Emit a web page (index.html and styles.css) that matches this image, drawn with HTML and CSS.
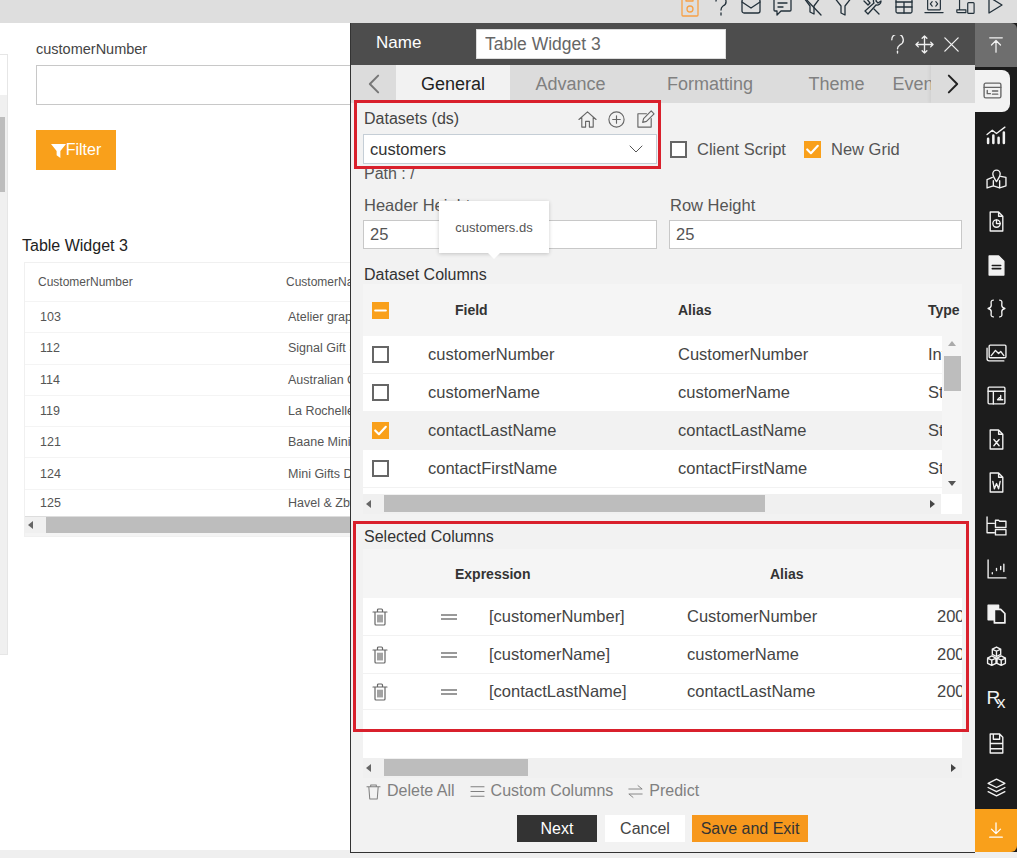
FILE: index.html
```html
<!DOCTYPE html>
<html lang="en">
<head>
    <meta charset="UTF-8">
    <title>Table Widget 3</title>
    <link rel="stylesheet" href="styles.css">
</head>
<body>
    <div class="toolbar">
        <svg class="tool tool-save" viewBox="0 0 20 20"><path d="M3 -2h11l4 4v15a1 1 0 0 1-1 1H3a1 1 0 0 1-1-1V-1a1 1 0 0 1 1-1z"/><circle cx="10" cy="11" r="3"/><path d="M6 -2v5h7v-5"/></svg>
        <svg class="tool" viewBox="0 0 20 20"><path d="M5 3a5 5 0 1 1 7 5c-1.500 1-2 2-2 4"/><path d="M10 15v2"/></svg>
        <svg class="tool" viewBox="0 0 20 20"><rect x="1" y="1" width="18" height="14" rx="2"/><path d="M1 4l9 6 9-6"/></svg>
        <svg class="tool" viewBox="0 0 20 20"><path d="M3 -1h15a1 1 0 0 1 1 1v12a1 1 0 0 1-1 1H9l-4 4v-4H3a1 1 0 0 1-1-1V0a1 1 0 0 1 1-1z"/><path d="M6 5h9M6 9h5"/></svg>
        <svg class="tool" viewBox="0 0 20 20"><path d="M2 0h16l-6 8v8l-4-2V8z"/><path d="M1 -2l18 19"/></svg>
        <svg class="tool" viewBox="0 0 20 20"><path d="M1 -1h18l-7 9v9l-4-2V8z"/></svg>
        <svg class="tool" viewBox="0 0 20 20"><path d="M3 0l4 5-2 2-4-4M14 -1a4 4 0 0 0-3 6L2 13l3 3 8-9a4 4 0 0 0 5-4l-3 2-2-2z"/><path d="M11 11l5 5"/></svg>
        <svg class="tool" viewBox="0 0 20 20"><rect x="2" y="-1" width="16" height="16" rx="1.500"/><path d="M2 4h16M2 9h16M10 4v11"/></svg>
        <svg class="tool" viewBox="0 0 22 20"><rect x="4" y="-1" width="14" height="13" rx="1"/><path d="M1 15h20M9 3L7 5.500 9 8M13 3l2 2.500L13 8"/></svg>
        <svg class="tool" viewBox="0 0 22 20"><path d="M5 -1v13M2 12h10v3H3a1 1 0 0 1-1-1z"/><rect x="14" y="4" width="7" height="12" rx="1"/></svg>
        <svg class="tool" viewBox="0 0 20 20"><path d="M4 -1l13 8L4 15z"/></svg>
    </div>

    <div class="workspace">
        <div class="canvas">
            <div class="side-strip">
                <div class="side-fill"><div class="side-thumb"></div></div>
            </div>
            <div class="report">
                <div class="filter-form">
                    <label class="filter-label">customerNumber</label>
                    <input class="filter-input" type="text">
                    <button class="filter-btn">
                        <svg viewBox="0 0 16 16" class="filter-icon"><path d="M0 1h16L10 8.500V16l-4-3V8.500z"/></svg>Filter
                    </button>
                </div>
                <h3 class="widget-title">Table Widget 3</h3>
                <div class="preview-table">
                    <div class="preview-row preview-head"><span>CustomerNumber</span><span>CustomerName</span></div>
                    <div class="preview-row"><span>103</span><span>Atelier graphique</span></div>
                    <div class="preview-row"><span>112</span><span>Signal Gift Stores</span></div>
                    <div class="preview-row"><span>114</span><span>Australian Collectors</span></div>
                    <div class="preview-row"><span>119</span><span>La Rochelle Gifts</span></div>
                    <div class="preview-row"><span>121</span><span>Baane Mini Imports</span></div>
                    <div class="preview-row"><span>124</span><span>Mini Gifts Distributors</span></div>
                    <div class="preview-row"><span>125</span><span>Havel &amp; Zbyszek</span></div>
                    <div class="scroll-h preview-scroll">
                        <span class="arrow-left"></span>
                        <div class="thumb-h"></div>
                    </div>
                </div>
            </div>
        </div>

        <div class="panel">
            <div class="panel-header">
                <span class="panel-name">Name</span>
                <input class="panel-name-input" type="text" value="Table Widget 3">
                <div class="panel-actions">
                    <svg viewBox="0 0 20 20"><path d="M4 5a6 6 0 1 1 8.500 5.500C11 11.500 10 12.500 10 14.500"/><path d="M10 17v2"/></svg>
                    <svg viewBox="0 0 20 20"><path d="M10 1v18M1 10h18M7.500 3.500L10 1l2.500 2.500M7.500 16.500L10 19l2.500-2.500M3.500 7.500L1 10l2.500 2.500M16.500 7.500L19 10l-2.500 2.500"/></svg>
                    <svg viewBox="0 0 20 20"><path d="M3 3l14 14M17 3L3 17"/></svg>
                </div>
            </div>

            <div class="tabs">
                <div class="tab-nav tab-prev"><svg viewBox="0 0 14 24"><path d="M12 2L2 12l10 10"/></svg></div>
                <div class="tab active">General</div>
                <div class="tab tab-advance">Advance</div>
                <div class="tab tab-formatting">Formatting</div>
                <div class="tab tab-theme">Theme</div>
                <div class="tab tab-events">Events</div>
                <div class="tab-nav tab-next"><svg viewBox="0 0 14 24"><path d="M2 2l10 10L2 22"/></svg></div>
            </div>

            <div class="panel-body">
                <div class="form-cols">
                    <div>
                        <div class="dataset-head">
                            <span>Datasets (ds)</span>
                            <div class="dataset-icons">
                                <svg viewBox="0 0 20 20"><path d="M1 10l9-8 9 8M4 8v10h4v-6h4v6h4V8"/></svg>
                                <svg viewBox="0 0 20 20"><circle cx="10" cy="10" r="8"/><path d="M10 6v8M6 10h8"/></svg>
                                <svg viewBox="0 0 20 20"><path d="M16 9v9H2V4h9"/><path d="M7 13l1-4L16 1l3 3-8 8z"/></svg>
                            </div>
                        </div>
                        <div class="select-box">
                            <span>customers</span>
                            <svg viewBox="0 0 14 8"><path d="M1 1l6 6 6-6"/></svg>
                        </div>
                    </div>
                    <div class="check-row">
                        <span class="check"></span><span class="check-label">Client Script</span>
                        <span class="check checked"><svg viewBox="0 0 16 16"><path d="M3 8l3.500 3.500L13 4.500"/></svg></span><span class="check-label">New Grid</span>
                    </div>
                </div>
                <div class="path-line">Path : /</div>

                <div class="form-cols size-fields">
                    <div>
                        <label class="field-label">Header Height</label>
                        <input class="field-input" type="text" value="25">
                    </div>
                    <div>
                        <label class="field-label">Row Height</label>
                        <input class="field-input" type="text" value="25">
                    </div>
                </div>

                <div class="section-title columns-title">Dataset Columns</div>
                <div class="dataset-table">
                    <div class="grid-head dataset-grid">
                        <span class="check checked"><svg viewBox="0 0 16 16"><path d="M3 8h10"/></svg></span>
                        <span class="head-field">Field</span>
                        <span>Alias</span>
                        <span>Type</span>
                    </div>
                    <div class="dataset-rows">
                        <div class="grid-row dataset-grid">
                            <span class="check"></span><span>customerNumber</span><span>CustomerNumber</span><span>Int</span>
                        </div>
                        <div class="grid-row dataset-grid">
                            <span class="check"></span><span>customerName</span><span>customerName</span><span>String</span>
                        </div>
                        <div class="grid-row dataset-grid row-selected">
                            <span class="check checked"><svg viewBox="0 0 16 16"><path d="M3 8l3.500 3.500L13 4.500"/></svg></span><span>contactLastName</span><span>contactLastName</span><span>String</span>
                        </div>
                        <div class="grid-row dataset-grid">
                            <span class="check"></span><span>contactFirstName</span><span>contactFirstName</span><span>String</span>
                        </div>
                        <div class="scroll-v">
                            <span class="arrow-up"></span>
                            <div class="thumb-v"></div>
                            <span class="arrow-down"></span>
                        </div>
                    </div>
                    <div class="scroll-h dataset-scroll">
                        <span class="arrow-left"></span>
                        <div class="thumb-h"></div>
                        <span class="arrow-right"></span>
                        <div class="scroll-corner"></div>
                    </div>
                </div>

                <div class="section-title selected-title">Selected Columns</div>
                <div class="selected-table">
                    <div class="grid-head selected-head">
                        <span>Expression</span>
                        <span>Alias</span>
                        <span>Width</span>
                    </div>
                    <div class="selected-rows">
                        <div class="grid-row selected-grid">
                            <svg class="trash" viewBox="0 0 16 18"><path d="M1 4h14M5.500 4V2a1 1 0 0 1 1-1h3a1 1 0 0 1 1 1v2M3 4v12a1 1 0 0 0 1 1h8a1 1 0 0 0 1-1V4M6 7v7M8 7v7M10 7v7"/></svg>
                            <span class="drag-lines"></span>
                            <span>[customerNumber]</span><span>CustomerNumber</span><span>200</span>
                        </div>
                        <div class="grid-row selected-grid">
                            <svg class="trash" viewBox="0 0 16 18"><path d="M1 4h14M5.500 4V2a1 1 0 0 1 1-1h3a1 1 0 0 1 1 1v2M3 4v12a1 1 0 0 0 1 1h8a1 1 0 0 0 1-1V4M6 7v7M8 7v7M10 7v7"/></svg>
                            <span class="drag-lines"></span>
                            <span>[customerName]</span><span>customerName</span><span>200</span>
                        </div>
                        <div class="grid-row selected-grid row-short">
                            <svg class="trash" viewBox="0 0 16 18"><path d="M1 4h14M5.500 4V2a1 1 0 0 1 1-1h3a1 1 0 0 1 1 1v2M3 4v12a1 1 0 0 0 1 1h8a1 1 0 0 0 1-1V4M6 7v7M8 7v7M10 7v7"/></svg>
                            <span class="drag-lines"></span>
                            <span>[contactLastName]</span><span>contactLastName</span><span>200</span>
                        </div>
                    </div>
                    <div class="scroll-h selected-scroll">
                        <span class="arrow-left"></span>
                        <div class="thumb-h"></div>
                        <span class="arrow-right"></span>
                    </div>
                </div>

                <div class="column-actions">
                    <span class="column-action">
                        <svg viewBox="0 0 16 18"><path d="M1 4h14M5 4V2h6v2M3 4l1 13h8l1-13"/></svg>Delete All
                    </span>
                    <span class="column-action">
                        <svg viewBox="0 0 16 18"><path d="M1 4h14M1 9h14M1 14h14"/></svg>Custom Columns
                    </span>
                    <span class="column-action">
                        <svg viewBox="0 0 18 18"><path d="M1 6h16L12 2M17 12H1l5 4"/></svg>Predict
                    </span>
                </div>

                <div class="panel-buttons">
                    <button class="btn btn-next">Next</button>
                    <button class="btn btn-cancel">Cancel</button>
                    <button class="btn btn-save">Save and Exit</button>
                </div>
            </div>

            <!-- red callouts and tooltip sit on top of the form -->
            <div class="callout callout-datasets"></div>
            <div class="callout callout-selected"></div>
            <div class="tooltip">customers.ds</div>
        </div>

        <div class="rail">
            <div class="rail-top"><svg viewBox="0 0 20 20"><path d="M3 2h14M10 18V5M5 10l5-5 5 5"/></svg></div>
            <div class="rail-items">
                <div class="rail-item active"><svg viewBox="0 0 20 20"><rect x="2" y="3" width="16" height="14" rx="1.500"/><path d="M2 7h16M5 10v3h3M10 10.500h5M10 13.500h5"/></svg></div>
                <div class="rail-item"><svg viewBox="0 0 20 20"><path d="M1 10l5-4 4 3 8-6"/><path d="M2 18v-4M7 18v-7M12 18v-5M17 18V8" class="thick"/></svg></div>
                <div class="rail-item"><svg viewBox="0 0 20 20"><path d="M6 9L1 11v8l6-2 6 2 6-2V9l-5-1M7 12v5M13 12v7"/><path d="M10 13C8 10 6.500 8 6.500 5.500a3.500 3.500 0 0 1 7 0C13.500 8 12 10 10 13z"/></svg></div>
                <div class="rail-item"><svg viewBox="0 0 20 20"><path d="M4 1h8l4 4v14H4zM12 1v4h4"/><circle cx="10" cy="12" r="3.500"/><path d="M10 12V8.500M10 12h3.500"/></svg></div>
                <div class="rail-item"><svg viewBox="0 0 20 20"><path class="solid" d="M3 1h9l5 5v13H3z"/><path class="cut" d="M6 10h8M6 13h8"/></svg></div>
                <div class="rail-item"><svg viewBox="0 0 20 20"><path d="M7 2C4 2 5 5 5 7S4 9.500 2 10c2 .500 3 1 3 3s-1 5 2 5M13 2c3 0 2 3 2 5s1 2.500 3 3c-2 .500-3 1-3 3s1 5-2 5"/></svg></div>
                <div class="rail-item"><svg viewBox="0 0 20 20"><rect x="3" y="3" width="16" height="12" rx="1"/><path d="M1 6v10a2 2 0 0 0 2 2h14M5 13l4-5 3 3 2-2 3 4"/></svg></div>
                <div class="rail-item"><svg viewBox="0 0 20 20"><rect x="2" y="2" width="16" height="16" rx="1"/><path d="M2 6h16M7 6v12M11 14h5M14 10v4M11 14l2-2"/></svg></div>
                <div class="rail-item"><svg viewBox="0 0 20 20"><path d="M4 1h8l4 4v14H4zM12 1v4h4M7.500 10l5 6M12.500 10l-5 6"/></svg></div>
                <div class="rail-item"><svg viewBox="0 0 20 20"><path d="M4 1h8l4 4v14H4zM12 1v4h4M6.500 9l1.500 7 2-5 2 5 1.500-7"/></svg></div>
                <div class="rail-item"><svg viewBox="0 0 20 20"><path d="M1 1v15h7M1 7h7"/><path d="M9 4h3l1 1h6v6H9zM9 13h10v5H9z"/></svg></div>
                <div class="rail-item"><svg viewBox="0 0 20 20"><path d="M2 1v17h17M6 13v1M10 9v2M14 7v3M17 5v7"/></svg></div>
                <div class="rail-item"><svg viewBox="0 0 20 20"><path class="solid" d="M2 2h10v14H2z"/><path class="cut-fill" d="M8 6h6l4 4v9H8z"/></svg></div>
                <div class="rail-item"><svg viewBox="0 0 20 20"><path d="M10 1l4 2v5l-4 2-4-2V3zM6 3l4 2 4-2M10 5v5M5.500 9.500l4 2v5l-4 2-4-2v-5zM14.500 9.500l4 2v5l-4 2-4-2v-5zM1.500 11.500l4 2 4-2M5.500 13.500v5M10.500 11.500l4 2 4-2M14.500 13.500v5"/></svg></div>
                <div class="rail-item"><span class="rx">R<sub>x</sub></span></div>
                <div class="rail-item"><svg viewBox="0 0 20 20"><path d="M4 1h9l3 3v15H4zM7 1v5h6V1M4 10h12v5H4z"/></svg></div>
                <div class="rail-item"><svg viewBox="0 0 20 20"><path d="M10 2l8 4-8 4-8-4zM2 10l8 4 8-4M2 14l8 4 8-4"/></svg></div>
            </div>
            <div class="rail-bottom"><svg viewBox="0 0 20 20"><path d="M10 2v12M5 9l5 5 5-5M3 18h14"/></svg></div>
        </div>
    </div>
</body>
</html>
```

FILE: styles.css
```css
* {
    margin: 0;
    padding: 0;
    box-sizing: border-box;
}

body {
    font-family: "Liberation Sans", Arial, sans-serif;
    width: 1017px;
    height: 858px;
    overflow: hidden;
    color: #333;
    background: #efefef;
}

svg {
    fill: none;
    stroke: currentColor;
    stroke-linecap: round;
    stroke-linejoin: round;
}

/* top toolbar */
.toolbar {
    height: 23px;
    background: #dedede;
    display: flex;
    justify-content: flex-end;
    align-items: flex-start;
    gap: 10.500px;
    padding-right: 12px;
    overflow: hidden;
    color: #22303a;
}

.tool {
    width: 20px;
    height: 20px;
    margin-top: -2px;
    stroke-width: 1.300;
    overflow: visible;
    flex: none;
}

.tool-save {
    color: #f7a045;
}

.workspace {
    display: flex;
    height: 830px;
}

/* report behind the panel */
.canvas {
    width: 350px;
    height: 827px;
    background: #fff;
    display: flex;
    overflow: hidden;
    flex: none;
}

.side-strip {
    width: 8px;
    height: 601px;
    margin-top: 31px;
    padding-top: 40px;
    border-right: 1px solid #e6e6e6;
    border-top: 1px solid #e6e6e6;
    border-bottom: 1px solid #e6e6e6;
    flex: none;
}

.side-fill {
    height: 100%;
    background: #f0f0f0;
    padding-top: 22px;
}

.side-thumb {
    width: 5px;
    height: 75px;
    background: #bdbdbd;
}

.report {
    padding: 16px 0 0 14px;
    width: 500px;
    flex: none;
}

.filter-form {
    padding-left: 14px;
}

.filter-label {
    display: block;
    font-size: 14.500px;
    line-height: 20px;
    color: #444;
    margin-bottom: 6px;
}

.filter-input {
    display: block;
    width: 400px;
    height: 40px;
    border: 1px solid #c8c8c8;
    background: #fff;
}

.filter-btn {
    display: flex;
    align-items: center;
    justify-content: center;
    width: 80px;
    height: 40px;
    margin-top: 25px;
    background: #f9a01b;
    border: none;
    color: #fff;
    font-family: inherit;
    font-size: 16px;
}

.filter-icon {
    width: 15px;
    height: 15px;
    fill: #fff;
    stroke: none;
}

.widget-title {
    font-size: 16px;
    font-weight: normal;
    line-height: 20px;
    color: #222;
    margin-top: 66px;
}

.preview-table {
    margin: 6px 0 0 2px;
    border: 1px solid #f0f0f0;
    width: 480px;
    background: #fff;
}

.preview-row {
    display: grid;
    grid-template-columns: 248px 1fr;
    align-items: center;
    height: 31.300px;
    padding-left: 15px;
    font-size: 12.500px;
    color: #555;
    border-bottom: 1px solid #f4f4f4;
    white-space: nowrap;
}

.preview-head {
    height: 39px;
    padding-left: 13px;
    font-size: 12px;
    color: #555;
}

.preview-row:nth-last-child(2) {
    height: 26px;
    border-bottom: none;
}

/* scrollbars */
.scroll-h {
    position: relative;
    display: flex;
    align-items: center;
    height: 20px;
    background: #f0f0f0;
}

.thumb-h {
    position: absolute;
    top: 1px;
    bottom: 2px;
    background: #bdbdbd;
}

.preview-scroll {
    height: 20px;
    border-top: 1px solid #ddd;
    border-bottom: 3px solid #f4f4f4;
}

.preview-scroll .thumb-h {
    left: 21px;
    right: 0;
    top: 0;
    bottom: 0;
}

.arrow-left,
.arrow-right,
.arrow-up,
.arrow-down {
    position: absolute;
    width: 0;
    height: 0;
    border: 4px solid transparent;
}

.arrow-left {
    left: 3px;
    border-right: 5px solid #666;
    border-left: none;
}

.arrow-right {
    border-left: 5px solid #444;
    border-right: none;
}

.arrow-up {
    top: 5px;
    left: 6px;
    border-bottom: 5px solid #aaa;
    border-top: none;
}

.arrow-down {
    bottom: 8px;
    left: 6px;
    border-top: 5px solid #555;
    border-bottom: none;
}

/* settings panel */
.panel {
    position: relative;
    width: 625px;
    height: 830px;
    flex: none;
    background: #f2f2f2;
    border-left: 1px solid #333;
    border-bottom: 1px solid #333;
}

.panel-header {
    display: flex;
    align-items: center;
    height: 42px;
    background: #4d4d4d;
    padding-left: 25px;
}

.panel-name {
    width: 100px;
    font-size: 17px;
    color: #fff;
    margin-top: -3px;
}

.panel-name-input {
    width: 250px;
    height: 30px;
    padding-left: 8px;
    border: 1px solid #ddd;
    background: #fff;
    color: #666;
    font-family: inherit;
    font-size: 17.500px;
}

.panel-actions {
    display: flex;
    gap: 8px;
    margin-left: auto;
    margin-right: 14px;
    color: #f0f0f0;
}

.panel-actions svg {
    width: 19px;
    height: 19px;
    stroke-width: 1.400;
}

.tabs {
    position: relative;
    display: flex;
    height: 38px;
    background: #dcdcdc;
    font-size: 18px;
    overflow: hidden;
    white-space: nowrap;
}

.tab {
    display: flex;
    align-items: center;
    justify-content: center;
    height: 38px;
    color: #808080;
    flex: none;
}

.tab.active {
    width: 114px;
    background: #f2f2f2;
    color: #222;
}

.tab-advance {
    width: 121px;
}

.tab-formatting {
    width: 136px;
    margin-left: 11px;
}

.tab-theme {
    width: 107px;
    margin-left: 5px;
}

.tab-events {
    margin-left: 0;
    padding-left: 0;
    margin-right: 0;
    width: 60px;
}

.tab-nav {
    display: flex;
    align-items: center;
    justify-content: center;
    height: 38px;
    flex: none;
    background: #dcdcdc;
}

.tab-prev {
    width: 45px;
    color: #777;
}

.tab-next {
    position: absolute;
    top: 0;
    right: 0;
    width: 44px;
    color: #222;
    box-shadow: -2px 0 3px rgba(0, 0, 0, 0.05);
}

.tab-nav svg {
    width: 14px;
    height: 20px;
    stroke-width: 2.400;
}

.panel-body {
    padding: 4px 13px 0 12px;
    font-size: 16px;
}

.form-cols {
    display: grid;
    grid-template-columns: 294px 293px;
    gap: 12px;
}

.dataset-head {
    display: flex;
    justify-content: space-between;
    align-items: center;
    height: 24px;
    padding: 0 2px 0 1px;
    margin-bottom: 3px;
    color: #444;
}

.dataset-icons {
    display: flex;
    gap: 10px;
    color: #666;
}

.dataset-icons svg {
    width: 19px;
    height: 19px;
    stroke-width: 1.200;
}

.select-box {
    display: flex;
    justify-content: space-between;
    align-items: center;
    height: 30px;
    padding: 0 13px 0 6px;
    background: #fff;
    border: 1px solid #c5ced6;
    font-size: 16.500px;
}

.select-box svg {
    width: 14px;
    height: 8px;
    stroke-width: 1;
    color: #555;
}

.check-row {
    display: flex;
    align-items: center;
    padding: 27px 0 0 1px;
}

.check {
    display: inline-flex;
    width: 17px;
    height: 17px;
    border: 2px solid #666;
    background: #fff;
    flex: none;
}

.check.checked {
    background: #f9a01b;
    border: none;
}

.check.checked svg {
    width: 17px;
    height: 17px;
    stroke: #fff;
    stroke-width: 2;
}

.check-label {
    margin-left: 10px;
    color: #555;
    font-size: 16.500px;
}

.check-label:nth-child(2) {
    width: 107px;
    flex: none;
}

.path-line {
    height: 20px;
    line-height: 20px;
    padding-left: 1px;
    color: #555;
}

.size-fields {
    margin-top: 11px;
}

.field-label {
    display: block;
    height: 20px;
    line-height: 20px;
    padding-left: 1px;
    margin-bottom: 5px;
    color: #555;
    font-size: 16.500px;
}

.field-input {
    display: block;
    width: 100%;
    height: 29px;
    padding-left: 6px;
    border: 1px solid #c8c8c8;
    background: #fff;
    color: #555;
    font-family: inherit;
    font-size: 16.500px;
}

.section-title {
    padding-left: 1px;
    line-height: 20px;
    height: 20px;
    color: #333;
}

.columns-title {
    margin-top: 16px;
}

.grid-head {
    display: grid;
    align-items: center;
    background: #f5f5f5;
    font-size: 14px;
    font-weight: bold;
    color: #333;
    overflow: hidden;
    white-space: nowrap;
}

.dataset-table {
    margin-top: -1px;
}

.dataset-grid {
    grid-template-columns: 65px 250px 250px 40px;
    padding-left: 9px;
}

.dataset-table .grid-head {
    height: 52px;
    width: 599px;
    grid-template-columns: 65px 241px 250px 40px;
}

.dataset-table .check {
    margin-left: 0;
}

.head-field {
    padding-left: 18px;
}

.dataset-rows {
    position: relative;
    width: 599px;
    height: 158px;
    background: #fff;
    overflow: hidden;
}

.grid-row {
    display: grid;
    align-items: center;
    height: 38px;
    background: #fff;
    border-bottom: 1px solid #f2f2f2;
    white-space: nowrap;
    color: #444;
    font-size: 16.500px;
}

.dataset-rows .grid-row {
    grid-template-columns: 56px 250px 250px 40px;
}

.row-selected {
    background: #f2f2f2;
}

.scroll-v {
    position: absolute;
    top: 0;
    right: 0;
    bottom: 0;
    width: 20px;
    background: #f5f5f5;
}

.thumb-v {
    position: absolute;
    top: 20px;
    left: 2px;
    width: 17px;
    height: 35px;
    background: #bdbdbd;
}

.dataset-scroll {
    width: 599px;
}

.dataset-scroll .thumb-h {
    left: 21px;
    width: 381px;
}

.dataset-scroll .arrow-right {
    right: 27px;
}

.scroll-corner {
    position: absolute;
    top: 0;
    right: 0;
    width: 21px;
    height: 20px;
    background: #fff;
}

.selected-title {
    margin-top: 13px;
}

.selected-table {
    width: 599px;
    margin-top: 2px;
}

.selected-head {
    height: 49px;
    grid-template-columns: 315px 250px 40px;
    padding-left: 92px;
}

.selected-rows {
    height: 160px;
    background: #fff;
    overflow: hidden;
}

.selected-grid {
    grid-template-columns: 69px 48px 198px 250px 40px;
    padding-left: 9px;
}

.row-short {
    height: 36px;
}

.trash {
    width: 16px;
    height: 18px;
    color: #666;
    stroke-width: 1.200;
}

.drag-lines {
    width: 16px;
    height: 6px;
    border-top: 2px solid #999;
    border-bottom: 2px solid #999;
}

.selected-scroll .thumb-h {
    left: 21px;
    width: 144px;
}

.selected-scroll .arrow-right {
    right: 6px;
}

.column-actions {
    display: flex;
    gap: 15px;
    align-items: center;
    height: 26px;
    padding-left: 3px;
    color: #808080;
    font-size: 16px;
}

.column-action {
    display: flex;
    align-items: center;
    gap: 6px;
}

.column-action svg {
    width: 15px;
    height: 17px;
    stroke-width: 1.100;
}

.panel-buttons {
    display: flex;
    gap: 8px;
    margin-top: 11px;
    padding-left: 154px;
}

.btn {
    height: 27px;
    width: 80px;
    border: none;
    font-family: inherit;
    font-size: 16px;
}

.btn-next {
    background: #333;
    color: #fff;
}

.btn-cancel {
    background: #fff;
    color: #444;
}

.btn-save {
    width: 116px;
    margin-left: -1px;
    background: #f7981d;
    color: #333;
}

.callout {
    position: absolute;
    border: 3px solid #d9202c;
    pointer-events: none;
}

.callout-datasets {
    left: 3px;
    top: 77px;
    width: 307px;
    height: 69px;
}

.callout-selected {
    left: 2px;
    top: 498px;
    width: 616px;
    height: 211px;
}

.tooltip {
    position: absolute;
    left: 88px;
    top: 178px;
    width: 110px;
    height: 52px;
    display: flex;
    align-items: center;
    justify-content: center;
    background: #fff;
    color: #555;
    font-size: 13px;
    box-shadow: 0 1px 4px rgba(0, 0, 0, 0.2);
}

.tooltip::after {
    content: "";
    position: absolute;
    left: 50%;
    bottom: -6px;
    margin-left: -6px;
    border-left: 6px solid transparent;
    border-right: 6px solid transparent;
    border-top: 6px solid #fff;
}

/* right rail */
.rail {
    width: 42px;
    height: 829px;
    flex: none;
    display: flex;
    flex-direction: column;
    background: #1c1c1c;
    color: #f2f2f2;
}

.rail-top {
    display: flex;
    align-items: center;
    justify-content: center;
    height: 47px;
    background: #6e6e6e;
    border-radius: 0 6px 0 0;
}

.rail-top svg {
    width: 18px;
    height: 18px;
    stroke-width: 1.400;
}

.rail-items {
    flex: 1;
    padding-top: 3px;
}

.rail-item {
    display: flex;
    align-items: center;
    justify-content: center;
    height: 43.500px;
}

.rail-item svg {
    width: 21px;
    height: 21px;
    stroke-width: 1.300;
}

.rail-item .thick {
    stroke-width: 2.400;
}

.rail-item .solid {
    fill: #f2f2f2;
    stroke: #f2f2f2;
}

.rail-item .cut {
    stroke: #1c1c1c;
    stroke-width: 1.500;
}

.rail-item .cut-fill {
    fill: #1c1c1c;
    stroke: #f2f2f2;
    stroke-width: 1.600;
}

.rail-item.active {
    width: 35px;
    height: 42px;
    margin-bottom: 1px;
    background: #f2f2f2;
    border-radius: 0 8px 8px 0;
    color: #666;
}

.rx {
    font-size: 19px;
    color: #f2f2f2;
}

.rx sub {
    font-size: 17px;
    margin-left: -3px;
    vertical-align: -4px;
}

.rail-bottom {
    display: flex;
    align-items: center;
    justify-content: center;
    height: 46px;
    background: #f9a01b;
    border-radius: 0 0 6px 0;
    color: #fff;
}

.rail-bottom svg {
    width: 18px;
    height: 18px;
    stroke-width: 1.400;
}
```
